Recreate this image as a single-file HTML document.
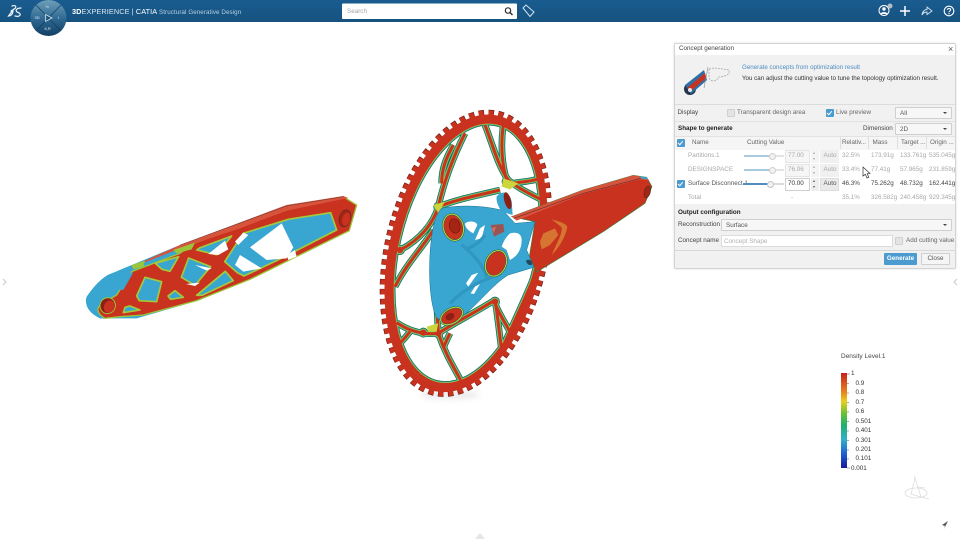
<!DOCTYPE html>
<html>
<head>
<meta charset="utf-8">
<style>
html,body{margin:0;padding:0;background:#fff}
body{width:960px;height:540px;position:relative;overflow:hidden;font-family:"Liberation Sans",sans-serif;color:#444}
svg{position:absolute;left:0;top:0}
.t{position:absolute;font-size:6.3px;line-height:8px;white-space:nowrap;color:#444}
.b{position:absolute;box-sizing:border-box}
.g{color:#a8a8a8}
.hd{color:#666}
.sel{position:absolute;box-sizing:border-box;background:#f7f7f7;border:1px solid #cfcfcf;border-radius:1px;font-size:6.3px;line-height:11px;padding-left:4px;color:#555}
.sel:after{content:"";position:absolute;right:4px;top:4px;border:2px solid transparent;border-top:2px solid #444;border-bottom:0}
.cb{position:absolute;box-sizing:border-box;width:8px;height:8px;background:#e4e4e4;border:1px solid #d0d0d0;border-radius:1px}
.cb.on{background:#4b9ad0;border-color:#4b9ad0}
.cb.on:after{content:"";position:absolute;left:1.4px;top:.4px;width:2px;height:3.6px;border:solid #fff;border-width:0 1px 1px 0;transform:rotate(40deg)}
</style>
</head>
<body>

<svg width="960" height="540" viewBox="0 0 960 540">
<defs>
<linearGradient id="bar" x1="0" y1="0" x2="0" y2="1"><stop offset="0" stop-color="#1a5c90"/><stop offset="1" stop-color="#16527f"/></linearGradient>
<linearGradient id="cmp" x1="0" y1="0" x2="0" y2="1"><stop offset="0" stop-color="#6f9fb9"/><stop offset=".55" stop-color="#2c6690"/><stop offset="1" stop-color="#123f63"/></linearGradient>
<linearGradient id="leg" x1="0" y1="0" x2="0" y2="1">
<stop offset="0" stop-color="#c8201c"/><stop offset=".2" stop-color="#e8851c"/><stop offset=".3" stop-color="#e8d020"/><stop offset=".42" stop-color="#70c030"/><stop offset=".55" stop-color="#20b070"/><stop offset=".7" stop-color="#30b0c8"/><stop offset=".85" stop-color="#2060d0"/><stop offset="1" stop-color="#1a1a9a"/>
</linearGradient>
<g id="spk">
<ellipse cx="291" cy="490" rx="211" ry="401" transform="rotate(13 291 490)"/>
<path d="M345,105 C370,170 385,230 415,270 C450,300 490,315 525,335"/>
<path d="M400,105 C392,160 395,220 410,270"/>
<path d="M520,262 C490,275 450,275 418,282"/>
<path d="M285,130 C255,190 225,260 205,350"/>
<path d="M250,165 C225,210 215,240 215,280"/>
<path d="M390,300 C330,315 270,325 205,350"/>
<path d="M205,350 C190,400 150,450 90,480"/>
<path d="M190,420 C160,470 110,520 75,590"/>
<path d="M80,698 C120,725 160,735 205,730 C250,700 320,665 375,630"/>
<path d="M205,730 C225,790 250,830 272,870"/>
<path d="M120,725 C105,745 95,755 85,765"/>
<path d="M375,630 C385,690 390,750 395,780 C370,820 330,850 300,870"/>
<path d="M240,730 C230,750 225,760 220,775"/>
<path d="M375,640 C390,680 420,720 430,745"/>
<path d="M500,540 C470,620 420,720 395,780"/>
<path d="M210,350 C200,450 195,600 205,725"/>
<circle cx="410" cy="275" r="5"/><circle cx="205" cy="350" r="5"/><circle cx="205" cy="730" r="5"/><circle cx="375" cy="635" r="5"/><circle cx="395" cy="780" r="5"/><circle cx="90" cy="480" r="5"/><circle cx="160" cy="728" r="5"/>
</g>
</defs>

<!-- LEFT CRANK -->
<g transform="translate(80 190) scale(.3333)">
<path fill="#38a6d0" d="M18,325 C40,290 70,258 95,250 L300,165 L620,45 L790,20 L830,45 L800,120 L490,270 L360,330 L170,385 L60,385 C30,370 15,350 18,325Z"/>
<path fill="#c8321e" stroke="#9cc63a" stroke-width="4" d="M60,345 L110,315 L155,245 L300,190 L340,160 L620,60 L790,20 L830,45 L808,122 L510,268 L350,332 L190,375 L120,380 L75,385 C50,370 50,355 60,345Z"/>
<path fill="#d8533c" d="M150,232 L300,165 L620,45 L790,18 L805,24 L620,62 L480,115 L320,168 L200,215Z"/>
<g fill="#38a6d0" stroke="#a5c93c" stroke-width="5" stroke-linejoin="round">
<path d="M195,262 L245,275 L230,335 L178,332 L170,318Z"/>
<path d="M226,220 L296,200 L270,244 L246,238Z"/>
<path d="M326,204 L392,230 L345,286 L304,262Z"/>
<path d="M358,174 L455,138 L410,194 L350,180Z"/>
<path d="M490,130 L625,88 L752,68 L770,120 L590,212 L492,258 L472,248 L434,215Z"/>
<path d="M264,318 L285,302 L310,322 L272,328Z"/>
<path d="M135,352 L150,348 L180,360 L130,368Z"/>
<path d="M436,244 L460,272 L366,316 L350,316Z"/>
</g>
<path fill="#38a6d0" d="M95,250 L160,248 L130,300 L100,298 L62,320 L22,335 L20,320 C40,290 70,258 95,250Z"/>
<path fill="#38a6d0" d="M20,330 L60,345 C45,355 50,375 75,385 L60,385 C30,370 15,350 20,330Z"/>
<g fill="#fff">
<path d="M510,172 L605,100 L640,172 L620,205 L560,210Z"/>
<path d="M385,192 L435,152 L445,178 L415,195Z"/>
<path d="M490,128 L505,135 L475,165 L465,155Z"/>
<path d="M465,225 L480,195 L545,235 L490,245Z"/>
<path d="M620,195 L645,180 L650,200 L625,210Z"/>
<path d="M345,225 L395,235 L380,242Z"/>
<path d="M318,282 L360,278 L345,288Z"/>
</g>
<ellipse cx="83" cy="347" rx="23" ry="24" fill="#8e1f14" stroke="#9cc63a" stroke-width="3" transform="rotate(25 83 347)"/>
<ellipse cx="88" cy="350" rx="16" ry="19" fill="#c8321e" transform="rotate(25 88 350)"/>
<ellipse cx="795" cy="85" rx="17" ry="26" fill="#a52515" stroke="#2c2c2c" stroke-width="1.5" transform="rotate(15 795 85)"/>
<ellipse cx="799" cy="88" rx="12" ry="20" fill="#c8321e" transform="rotate(15 799 88)"/>
<path fill="#9cc63a" d="M280,180 L345,158 L335,178 L290,190Z"/>
<path fill="#9cc63a" d="M155,225 L195,212 L190,230 L160,238Z"/>
<path fill="none" stroke="#3a2a20" stroke-width="1" d="M300,165 L620,48 L790,20"/>
</g>

<!-- CHAINRING + RIGHT CRANK -->
<g transform="translate(370 90) scale(.3333)" fill="none">
<ellipse cx="240" cy="915" rx="90" ry="14" fill="#999" opacity=".18" style="filter:blur(8px)"/>
<use href="#spk" stroke="#16654e" stroke-width="20"/>
<use href="#spk" stroke="#3fb59a" stroke-width="16"/>
<use href="#spk" stroke="#a8cc3a" stroke-width="12"/>
<use href="#spk" stroke="#c8321e" stroke-width="9"/>
<ellipse cx="288" cy="490" rx="237" ry="430" pathLength="72" stroke="#6b1f14" stroke-width="17" stroke-dasharray=".56 .44" transform="rotate(13 288 490)"/>
<ellipse cx="288" cy="490" rx="236" ry="429" pathLength="72" stroke="#c8321e" stroke-width="15" stroke-dasharray=".5 .5" transform="rotate(13 288 490)"/>
<ellipse cx="288" cy="490" rx="221" ry="414" stroke="#c8321e" stroke-width="20" transform="rotate(13 288 490)"/>
<g fill="#cbd53c"><path d="M400,265 L445,280 L420,298 L395,290Z"/><path d="M170,710 L205,700 L200,725 L175,725Z"/><path d="M190,345 L225,335 L205,370Z"/></g>
<!-- right crank -->
<path fill="#c8321e" stroke="#3f7a3a" stroke-width="2" d="M425,380 L640,300 L790,256 L830,262 L846,290 L825,340 L700,425 L500,546 L478,500 L495,395Z"/>
<path fill="#d8533c" d="M425,380 L640,300 L790,256 L830,262 L838,272 L810,268 L640,312 L440,392Z"/>
<path fill="#38a6d0" d="M808,258 L830,262 L835,268 L815,266Z"/>
<ellipse cx="832" cy="306" rx="9" ry="18" fill="#a52515" stroke="#2c2c2c" stroke-width="1.5" transform="rotate(15 832 306)"/>
<path fill="none" stroke="#2b2020" stroke-width="1.3" d="M432,385 L640,310 L812,265"/>
<path fill="#e0a040" opacity=".6" d="M545,388 C570,395 590,400 592,412 C585,445 565,475 545,495 C560,460 578,430 575,412 C565,403 555,396 545,388Z"/>
<path fill="#e0a040" opacity=".6" d="M520,430 L555,415 L565,435 L540,465 L515,478 L510,455Z"/>
<!-- body -->
<path fill="#38a6d0" stroke="#1c6d8f" stroke-width="1.5" d="M215,355 C260,345 340,345 400,362 L435,400 L495,395 L470,480 L492,532 L415,555 C365,585 320,650 272,682 C250,700 218,705 198,680 C180,640 172,540 185,440 C190,400 200,370 215,355Z"/>
<path fill="#38a6d0" d="M380,320 C395,300 420,305 425,335 L428,375 L395,365 C385,350 378,335 380,320Z"/>
<g fill="#fff">
<path d="M285,400 C300,390 320,395 322,405 L310,430 C300,425 285,415 285,400Z"/>
<path d="M420,430 C440,425 455,430 455,450 C455,480 440,500 420,510 L410,480 L395,470 C402,450 410,440 420,430Z"/>
<path d="M330,415 L345,405 L335,445 L315,450Z"/>
<path d="M365,415 L378,410 L372,428Z"/>
<path d="M305,555 L325,548 L295,590 L288,580Z"/>
<path d="M318,585 L340,565 L312,612 L302,610Z"/>
</g>
<path fill="#c8321e" d="M362,405 L400,402 L403,425 L372,440Z" opacity=".7"/>
<path fill="none" stroke="#2f97c2" stroke-width="10" d="M275,465 C320,500 340,530 350,560 M345,435 C320,470 300,470 285,480 M240,640 C290,590 340,570 395,550"/>
<path fill="#1c3a4a" opacity=".85" d="M468,512 C478,505 488,512 486,524 C478,528 470,522 468,512Z"/>
<!-- bosses -->
<ellipse cx="250" cy="412" rx="30" ry="40" fill="#c8321e" stroke="#16654e" stroke-width="6" transform="rotate(-15 250 412)"/>
<ellipse cx="250" cy="412" rx="30" ry="40" stroke="#cbd53c" stroke-width="3" transform="rotate(-15 250 412)"/>
<ellipse cx="254" cy="408" rx="16" ry="22" fill="#a52515" stroke="#5a1710" stroke-width="1.5" transform="rotate(-15 254 408)"/>
<ellipse cx="378" cy="520" rx="30" ry="40" fill="#c8321e" stroke="#16654e" stroke-width="6" transform="rotate(25 378 520)"/>
<ellipse cx="378" cy="520" rx="30" ry="40" stroke="#cbd53c" stroke-width="3" transform="rotate(25 378 520)"/>
<ellipse cx="245" cy="678" rx="36" ry="22" fill="#c8321e" stroke="#16654e" stroke-width="6" transform="rotate(-30 245 678)"/>
<ellipse cx="245" cy="678" rx="36" ry="22" stroke="#cbd53c" stroke-width="3" transform="rotate(-30 245 678)"/>
<ellipse cx="240" cy="680" rx="14" ry="10" fill="#8e1f14" transform="rotate(-30 240 680)"/>
<ellipse cx="413" cy="332" rx="10" ry="26" fill="#8e1f14" transform="rotate(-15 413 332)"/>
</g>

<!-- legend -->
<rect x="841" y="373" width="6" height="95" fill="url(#leg)"/>
<g stroke="#555" stroke-width=".6">
<path d="M847,374H850M847,383.500H849M847,393H849M847,402.500H849M847,412H849M847,421.500H849M847,431H849M847,440.500H849M847,450H849M847,459H849M847,468H850"/>
</g>

<!-- triad -->
<g fill="none" stroke="#dcdcdc" stroke-width=".8">
<ellipse cx="916" cy="493" rx="11" ry="5"/>
<path d="M915,478 L921,497 L911,494 Z M921,497 L929,499 M915,478 L914,476 M918,487 L925,488"/>
</g>
<path fill="#555" d="M948,521 L942,525 L945,526 L944,529Z"/>

<!-- edge arrows -->
<g fill="none" stroke="#cfcfcf" stroke-width="1.2"><path d="M3,279 L6,282 L3,285"/><path d="M957,279 L954,282 L957,285"/></g>
<path d="M475,539 L480,533 L485,539Z" fill="#e6e6e6"/>

<!-- top bar -->
<rect x="0" y="0" width="960" height="22" fill="url(#bar)"/>
<!-- compass -->
<circle cx="48.500" cy="18" r="18" fill="url(#cmp)"/>
<path d="M48.500,18 L36,5 M48.500,18 L61,5 M48.500,18 L36,31 M48.500,18 L61,31" stroke="#0f3f62" stroke-width=".7"/>
<path d="M45.500,14.500 L52,18 L45.500,21.500Z" fill="none" stroke="#cfe0ea" stroke-width=".8"/>
<!-- DS logo -->
<g fill="none" stroke="#eef4f8" stroke-width="1.200" stroke-linecap="round">
<path d="M12,6 C15,5 17,6 15,8.500 L11,11 M8.500,16 L13,10 C13,14 11,16 8.500,16 Z"/>
<path d="M21,8 C17,8 15,10 17,12 C20,13 22,15 18,16.500 L15,16"/>
</g>
<!-- search -->
<rect x="342" y="3.500" width="175" height="15.500" rx="1" fill="#fff"/>
<circle cx="508" cy="10.500" r="2.700" fill="none" stroke="#333" stroke-width="1.200"/>
<path d="M510,12.500 L512.500,15" stroke="#333" stroke-width="1.500"/>
<!-- tag -->
<path d="M523,8 L526,5 L534,12 L530,16.500 Z" fill="none" stroke="#d8e6f0" stroke-width="1"/>
<!-- right icons -->
<circle cx="884" cy="10.500" r="5" fill="none" stroke="#fff" stroke-width="1"/>
<circle cx="884" cy="9" r="1.700" fill="#fff"/>
<path d="M880.500,14 C881,11.500 887,11.500 887.500,14Z" fill="#fff"/>
<circle cx="890" cy="6" r="2.500" fill="#b5bec6"/>
<path d="M905,6 V16 M900,11 H910" stroke="#fff" stroke-width="1.500"/>
<path d="M922,15 C922.500,11 925,9.500 927,9.500 V7 L932,11 L927,14.500 V12 C925,12 923,13 922,15Z" fill="none" stroke="#d8e6f0" stroke-width=".9"/>
<circle cx="949" cy="11" r="4.800" fill="none" stroke="#fff" stroke-width="1.100"/>
<path d="M947.300,9.800 C947.500,8 950.700,8 950.700,9.800 C950.700,11 949,11 949,12.300" fill="none" stroke="#fff" stroke-width="1"/>
<circle cx="949" cy="13.600" r=".6" fill="#fff"/>
</svg>

<!-- top bar text -->
<div class="t" style="left:72px;top:6.500px;font-size:7.300px;line-height:10px;color:#dbe7ef;letter-spacing:.1px"><b style="color:#fff">3D</b>EXPERIENCE | <b style="color:#fff;font-weight:normal">CATIA</b> <span style="font-size:6.200px;color:#b7cfdf">Structural Generative Design</span></div>
<div class="t" style="left:347px;top:8px;color:#a5a5a5;font-size:6.300px">Search</div>
<div class="t" style="left:45.500px;top:4px;color:#cfe0ea;font-size:4px;line-height:5px">%</div>
<div class="t" style="left:34.500px;top:15px;color:#e8f0f5;font-size:4px;line-height:5px">3D</div>
<div class="t" style="left:58px;top:15px;color:#e8f0f5;font-size:4px;line-height:5px">i</div>
<div class="t" style="left:44.500px;top:26px;color:#e8f0f5;font-size:4px;line-height:5px">6,R</div>

<!-- legend text -->
<div class="t" style="left:841px;top:353px;font-size:6.500px;color:#444">Density Level.1</div>
<div class="t" style="left:851px;top:370px;color:#333">1</div>
<div class="t" style="left:855.500px;top:379.500px;color:#333">0.9</div>
<div class="t" style="left:855.500px;top:389px;color:#333">0.8</div>
<div class="t" style="left:855.500px;top:398.500px;color:#333">0.7</div>
<div class="t" style="left:855.500px;top:408px;color:#333">0.6</div>
<div class="t" style="left:855.500px;top:417.500px;color:#333">0.501</div>
<div class="t" style="left:855.500px;top:427px;color:#333">0.401</div>
<div class="t" style="left:855.500px;top:436.500px;color:#333">0.301</div>
<div class="t" style="left:855.500px;top:446px;color:#333">0.201</div>
<div class="t" style="left:855.500px;top:455px;color:#333">0.101</div>
<div class="t" style="left:851px;top:464.500px;color:#333">0.001</div>

<!-- PANEL -->
<div class="b" style="left:673.500px;top:42.500px;width:282px;height:226.500px;background:#f1f1f1;border:1px solid #d4d4d4;border-radius:2px;box-shadow:0 0 2px rgba(0,0,0,.15)"></div>
<div class="b" style="left:674.500px;top:43.500px;width:280px;height:11px;background:#fff"></div>
<div class="t" style="left:679px;top:44.500px">Concept generation</div>
<div class="t" style="left:948px;top:44.500px;font-size:9px;color:#555">×</div>

<svg style="left:683px;top:64px" width="54" height="34" viewBox="0 0 54 34">
<ellipse cx="7" cy="25" rx="6" ry="6" fill="#23364c"/>
<path d="M2,21 L21,6 L24,16 L8,30Z" fill="#2f6fa8"/>
<path d="M4,24 L22,9 L23,14 L8,27Z" fill="#c8321e"/>
<circle cx="7" cy="26" r="2" fill="#e8e8e8"/>
<path d="M25,3 L21,24" stroke="#888" stroke-width=".6"/>
<path d="M26,5 C32,3 38,5 46,6 C48,11 40,13 36,13 C33,18 28,18 26,14Z" fill="none" stroke="#a8a8a8" stroke-width=".8" stroke-dasharray="2 1"/>
</svg>

<div class="t" style="left:742px;top:64px;color:#4d8dc0;font-size:6.200px">Generate concepts from optimization result</div>
<div class="t" style="left:742px;top:74.500px;color:#333;font-size:6.200px">You can adjust the cutting value to tune the topology optimization result.</div>

<div class="b" style="left:674.500px;top:104px;width:280px;height:1px;background:#dcdcdc"></div>
<div class="b" style="left:674.500px;top:121px;width:280px;height:1px;background:#e2e2e2"></div>
<div class="t" style="left:677.500px;top:109px">Display</div>
<div class="cb" style="left:727px;top:109px"></div>
<div class="t" style="left:737px;top:109px;color:#666">Transparent design area</div>
<div class="cb on" style="left:826px;top:109px"></div>
<div class="t" style="left:836px;top:109px;color:#666">Live preview</div>
<div class="sel" style="left:895px;top:107px;width:57px;height:12px">All</div>

<div class="t" style="left:678px;top:125px;color:#222"><b>Shape to generate</b></div>
<div class="t" style="left:863px;top:125px">Dimension</div>
<div class="sel" style="left:895px;top:123px;width:57px;height:12px">2D</div>

<!-- table -->
<div class="b" style="left:674.500px;top:136px;width:280px;height:13.500px;background:#f5f5f5;border-top:1px solid #e2e2e2"></div>
<div class="b" style="left:674.500px;top:149.500px;width:280px;height:54.500px;background:#fff"></div>
<div class="b" style="left:839.500px;top:137px;width:1px;height:12px;background:#dedede"></div>
<div class="b" style="left:868px;top:137px;width:1px;height:12px;background:#dedede"></div>
<div class="b" style="left:897px;top:137px;width:1px;height:12px;background:#dedede"></div>
<div class="b" style="left:926px;top:137px;width:1px;height:12px;background:#dedede"></div>
<div class="cb on" style="left:677px;top:139px"></div>
<div class="t hd" style="left:692px;top:138.500px">Name</div>
<div class="t hd" style="left:747px;top:138.500px">Cutting Value</div>
<div class="t hd" style="left:842px;top:138.500px">Relativ...</div>
<div class="t hd" style="left:872.500px;top:138.500px">Mass</div>
<div class="t hd" style="left:901px;top:138.500px">Target ...</div>
<div class="t hd" style="left:930px;top:138.500px">Origin ...</div>

<!-- row 1 -->
<div class="t g" style="left:688px;top:152px">Partitions.1</div>
<div class="b" style="left:744px;top:155px;width:27px;height:2px;background:#a9cbe2"></div>
<div class="b" style="left:775px;top:155px;width:9px;height:2px;background:#e4e4e4"></div>
<div class="b" style="left:769px;top:152.500px;width:7px;height:7px;border-radius:50%;background:#f2f2f2;border:1px solid #d0d0d0"></div>
<div class="b" style="left:785px;top:149.500px;width:25px;height:13px;background:#f6f6f6;border:1px solid #e4e4e4"></div>
<div class="t g" style="left:788px;top:152px">77.00</div>
<div class="b" style="left:811px;top:149.500px;width:8px;height:13px;background:#f4f4f4"></div>
<div class="t g" style="left:813px;top:150px;font-size:4px;line-height:5.500px">▴<br>▾</div>
<div class="b" style="left:820px;top:149.500px;width:19px;height:13px;background:#f0f0f0"></div>
<div class="t g" style="left:823.500px;top:152px">Auto</div>
<div class="t g" style="left:842px;top:152px">32.5%</div>
<div class="t g" style="left:871px;top:152px">173.91g</div>
<div class="t g" style="left:900px;top:152px">133.761g</div>
<div class="t g" style="left:929px;top:152px">535.045g</div>

<!-- row 2 -->
<div class="t g" style="left:688px;top:166px">DESIGNSPACE</div>
<div class="b" style="left:744px;top:169px;width:27px;height:2px;background:#a9cbe2"></div>
<div class="b" style="left:775px;top:169px;width:9px;height:2px;background:#e4e4e4"></div>
<div class="b" style="left:769px;top:166.500px;width:7px;height:7px;border-radius:50%;background:#f2f2f2;border:1px solid #d0d0d0"></div>
<div class="b" style="left:785px;top:163.500px;width:25px;height:13px;background:#f6f6f6;border:1px solid #e4e4e4"></div>
<div class="t g" style="left:788px;top:166px">76.06</div>
<div class="b" style="left:811px;top:163.500px;width:8px;height:13px;background:#f4f4f4"></div>
<div class="t g" style="left:813px;top:164px;font-size:4px;line-height:5.500px">▴<br>▾</div>
<div class="b" style="left:820px;top:163.500px;width:19px;height:13px;background:#f0f0f0"></div>
<div class="t g" style="left:823.500px;top:166px">Auto</div>
<div class="t g" style="left:842px;top:166px">33.4%</div>
<div class="t g" style="left:871px;top:166px">77.41g</div>
<div class="t g" style="left:900px;top:166px">57.965g</div>
<div class="t g" style="left:929px;top:166px">231.859g</div>

<!-- row 3 -->
<div class="cb on" style="left:677px;top:180px"></div>
<div class="t" style="left:688px;top:180px;color:#555">Surface Disconnect.1</div>
<div class="b" style="left:743px;top:183px;width:25px;height:2px;background:#4f8ec0"></div>
<div class="b" style="left:773px;top:183px;width:11px;height:2px;background:#dcdcdc"></div>
<div class="b" style="left:766.500px;top:180.500px;width:7px;height:7px;border-radius:50%;background:#f2f2f2;border:1px solid #c4c4c4"></div>
<div class="b" style="left:785px;top:177.500px;width:25px;height:13px;background:#fff;border:1px solid #cfcfcf"></div>
<div class="t" style="left:788px;top:180px;color:#333">70.00</div>
<div class="b" style="left:811px;top:177.500px;width:8px;height:13px;background:#eee"></div>
<div class="t" style="left:813px;top:178px;font-size:4px;line-height:5.500px;color:#555">▴<br>▾</div>
<div class="b" style="left:820px;top:177.500px;width:19px;height:13px;background:#eaeaea;border:1px solid #ddd"></div>
<div class="t" style="left:823.500px;top:180px;color:#555">Auto</div>
<div class="t" style="left:842px;top:180px;color:#444">46.3%</div>
<div class="t" style="left:871px;top:180px;color:#444">75.262g</div>
<div class="t" style="left:900px;top:180px;color:#444">48.732g</div>
<div class="t" style="left:929px;top:180px;color:#444">162.441g</div>

<!-- row 4 -->
<div class="t g" style="left:688px;top:194px">Total</div>
<div class="t g" style="left:791px;top:194px">-</div>
<div class="t g" style="left:842px;top:194px">35.1%</div>
<div class="t g" style="left:871px;top:194px">326.582g</div>
<div class="t g" style="left:900px;top:194px">240.458g</div>
<div class="t g" style="left:929px;top:194px">929.345g</div>

<!-- cursor -->
<svg style="left:861px;top:166px" width="12" height="14" viewBox="0 0 12 14">
<path d="M2,1 L2,10 L4.300,8.300 L6,12 L7.800,11.200 L6.200,7.700 L9,7.500Z" fill="#fff" stroke="#333" stroke-width=".7"/>
</svg>

<!-- output config -->
<div class="t" style="left:678px;top:209px;color:#222"><b>Output configuration</b></div>
<div class="t" style="left:678px;top:221px">Reconstruction</div>
<div class="sel" style="left:721px;top:219px;width:231px;height:12px">Surface</div>
<div class="t" style="left:678px;top:237px">Concept name</div>
<div class="b" style="left:721px;top:235px;width:172px;height:12px;background:#fff;border:1px solid #dcdcdc"></div>
<div class="t" style="left:724px;top:237.500px;color:#b0b0b0">Concept Shape</div>
<div class="cb" style="left:895px;top:237px"></div>
<div class="t" style="left:906px;top:237px;color:#666">Add cutting value</div>
<div class="b" style="left:674.500px;top:250px;width:280px;height:1px;background:#d8d8d8"></div>
<div class="b" style="left:884px;top:253px;width:33px;height:12px;background:#4b9ad0;border-radius:1px;color:#fff;font-size:6.300px;line-height:12px;text-align:center;font-weight:bold">Generate</div>
<div class="b" style="left:921px;top:253px;width:29px;height:12px;background:#f5f5f5;border:1px solid #cfcfcf;border-radius:1px;color:#555;font-size:6.300px;line-height:10px;text-align:center">Close</div>

</body>
</html>
